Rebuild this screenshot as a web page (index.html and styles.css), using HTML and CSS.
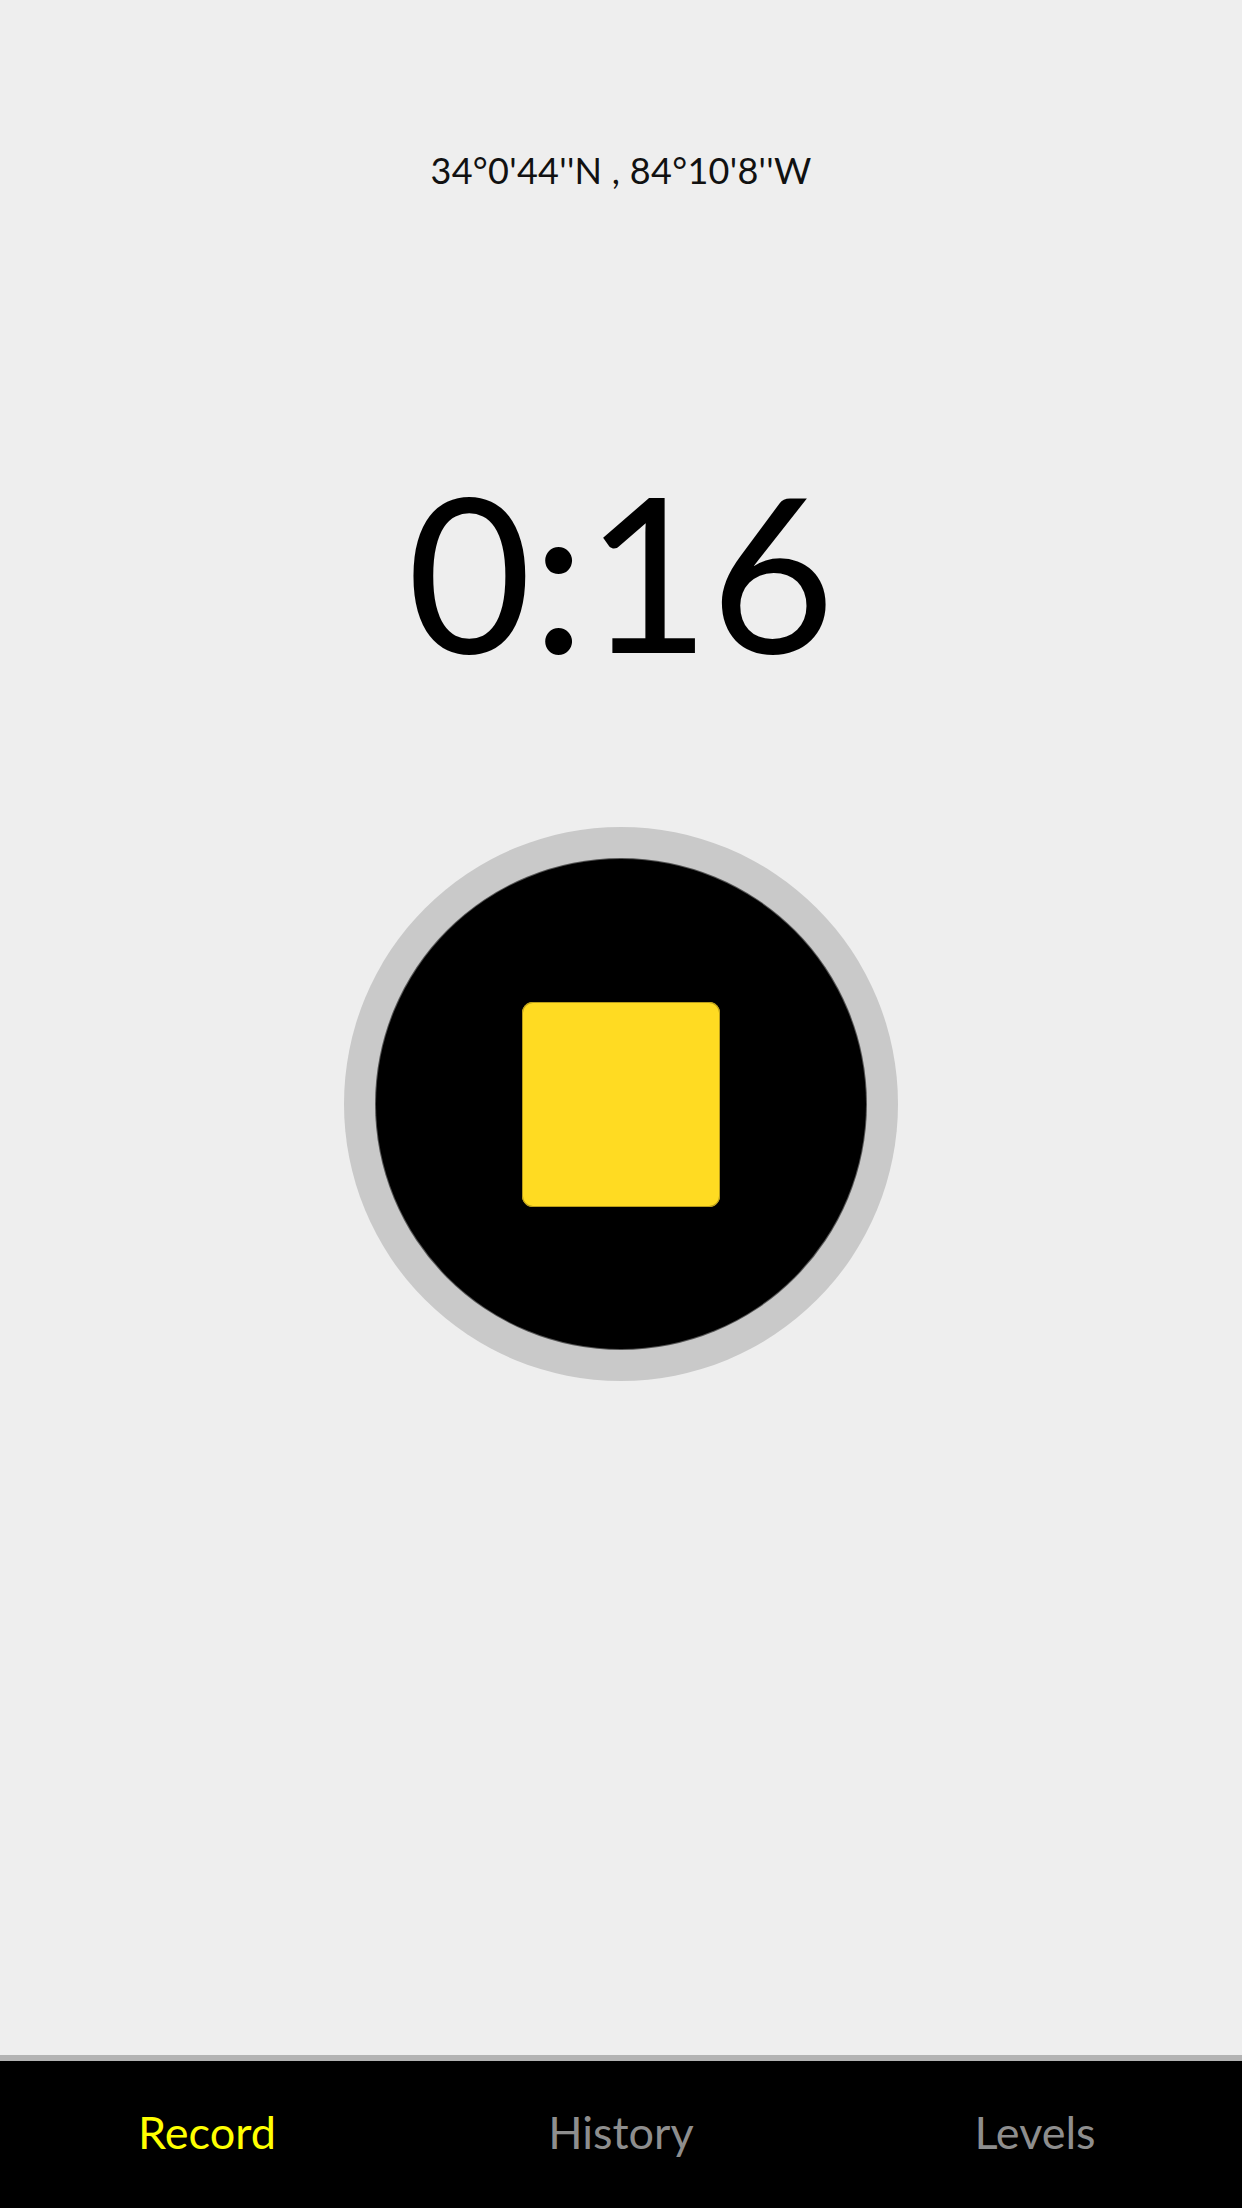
FILE: index.html
```html
<!DOCTYPE html>
<html>
<head>
<meta charset="utf-8">
<link rel="stylesheet" href="styles.css">
</head>
<body>
<div class="screen">
  <div class="coords">34°0'44''N , 84°10'8''W</div>
  <div class="timer">0:16</div>
  <div class="record-wrap">
    <div class="ring">
      <div class="disc">
        <div class="stop"></div>
      </div>
    </div>
  </div>
  <nav class="tabbar">
    <div class="tab active">Record</div>
    <div class="tab">History</div>
    <div class="tab">Levels</div>
  </nav>
</div>
</body>
</html>
```

FILE: styles.css
```css
html, body {
  margin: 0;
  padding: 0;
  background: #eeeeee;
}
.screen {
  width: 1242px;
  height: 2208px;
  display: flex;
  flex-direction: column;
  font-family: "Lato", "Noto Sans", sans-serif;
}
.coords {
  margin-top: 150px;
  height: 40px;
  line-height: 40px;
  font-size: 36px;
  letter-spacing: 0.3px;
  text-align: center;
  color: #111;
}
.timer {
  margin-top: 260px;
  height: 240px;
  line-height: 240px;
  font-size: 215px;
  text-align: center;
  color: #000;
}
.record-wrap {
  margin-top: 137px;
  display: flex;
  justify-content: center;
}
.ring {
  width: 554px;
  height: 554px;
  border-radius: 50%;
  background: #c9c9c9;
  display: flex;
  align-items: center;
  justify-content: center;
}
.disc {
  width: 490px;
  height: 490px;
  border-radius: 50%;
  background: #000;
  box-shadow: 0 0 0 1px #555;
  display: flex;
  align-items: center;
  justify-content: center;
}
.stop {
  width: 198px;
  height: 205px;
  border-radius: 11px;
  background: #ffdb22;
  box-shadow: inset 0 0 0 1px #b89c1a;
}
.tabbar {
  margin-top: auto;
  height: 147px;
  border-top: 6px solid #b3b3b3;
  background: #000;
  display: grid;
  grid-template-columns: 1fr 1fr 1fr;
  align-items: center;
}
.tab {
  text-align: center;
  font-size: 45px;
  color: #8e8e8e;
  padding-bottom: 6px;
}
.tab.active {
  color: #ffff00;
}
```
